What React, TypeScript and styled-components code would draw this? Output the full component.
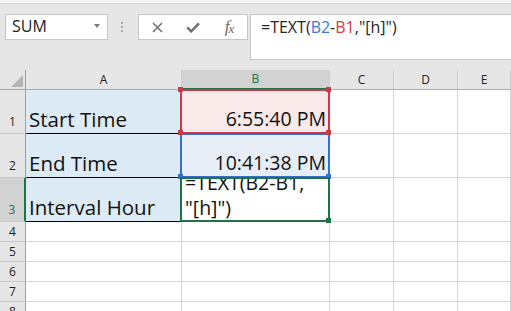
import React from 'react';
import styled, { createGlobalStyle, css } from 'styled-components';

const GlobalStyle = createGlobalStyle`
  html, body { margin: 0; padding: 0; background: #ffffff; }
  body {
    font-family: "Open Sans", "Noto Sans", sans-serif;
    width: 511px;
    height: 311px;
    overflow: hidden;
  }
  * { box-sizing: border-box; }
`;

const Page = styled.div`
  width: 511px;
  height: 311px;
  overflow: hidden;
  display: flex;
  flex-direction: column;
  background: #ffffff;
`;

const RibbonEdge = styled.div`
  flex: none;
  height: 4px;
  background: #f3f3f3;
  border-bottom: 1px solid #d5d5d5;
`;

const FormulaRow = styled.div`
  flex: none;
  height: 66px;
  display: flex;
  align-items: flex-start;
  padding: 10px 0 0 5px;
  background: #e6e6e6;
`;

const NameBox = styled.div`
  flex: none;
  width: 103px;
  height: 26px;
  background: #ffffff;
  border: 1px solid #c6c6c6;
  display: flex;
  align-items: flex-start;
  justify-content: space-between;
  padding: 0 7px 0 6px;
  font-size: 16px;
  line-height: 22px;
  color: #222222;
`;

const DropArrow = styled.span`
  align-self: center;
  margin-top: -2px;
  width: 0;
  height: 0;
  border-left: 3.5px solid transparent;
  border-right: 3.5px solid transparent;
  border-top: 4px solid #7a7a7a;
`;

const Grip = styled.div`
  flex: none;
  display: flex;
  flex-direction: column;
  gap: 2px;
  margin: 8px 15px 0 13px;
`;

const GripDot = styled.span`
  width: 2px;
  height: 2px;
  background: #a9a9a9;
`;

const FuncBox = styled.div`
  flex: none;
  width: 110px;
  height: 26px;
  background: #ffffff;
  border: 1px solid #c6c6c6;
  display: flex;
`;

const FuncButton = styled.div`
  width: 36px;
  height: 24px;
  display: flex;
  align-items: center;
  justify-content: center;
  color: #6f6f6f;
`;

const FxLabel = styled.span`
  font-family: "Liberation Serif", "DejaVu Serif", serif;
  font-style: italic;
  font-size: 17px;
  line-height: 16px;
  color: #6a6a6a;
  letter-spacing: -1px;
`;

const FxSub = styled.span`
  font-size: 13px;
  position: relative;
  top: 1px;
`;

const FormulaBar = styled.div`
  flex: 1;
  margin-left: 2px;
  height: 46px;
  background: #ffffff;
  border: 1px solid #c6c6c6;
  border-right: none;
  padding: 2px 0 0 10px;
  font-size: 16px;
  line-height: 20px;
  color: #262626;
  white-space: nowrap;
`;

const Ref = styled.span<{ $color: string }>`
  color: ${(p) => p.$color};
`;

const Sheet = styled.div`
  flex: none;
  display: grid;
  grid-template-columns: 26px 156px 148px 64px 64px 1fr;
  grid-template-rows: 20px 44px 44px 44px repeat(6, 20px);
`;

const Corner = styled.div`
  background: #e6e6e6;
  border-right: 1px solid #9e9e9e;
  border-bottom: 1px solid #ababab;
  display: flex;
  justify-content: flex-end;
  align-items: flex-end;
  padding: 0 2px 2px 0;
`;

const CornerTriangle = styled.span`
  width: 0;
  height: 0;
  border-left: 12px solid transparent;
  border-bottom: 12px solid #b4b4b4;
`;

const ColHeader = styled.div<{ $active?: boolean }>`
  background: ${(p) => (p.$active ? '#d2d2d2' : '#e6e6e6')};
  color: ${(p) => (p.$active ? '#217346' : '#222222')};
  border-right: 1px solid #cfcfcf;
  border-bottom: ${(p) => (p.$active ? '2px solid #217346' : '1px solid #ababab')};
  display: flex;
  align-items: center;
  justify-content: center;
  font-size: 12px;
  line-height: 16px;
`;

const RowHeader = styled.div<{ $active?: boolean; $tall?: boolean }>`
  background: ${(p) => (p.$active ? '#d2d2d2' : '#e6e6e6')};
  color: ${(p) => (p.$active ? '#217346' : '#222222')};
  border-right: ${(p) => (p.$active ? '2px solid #217346' : '1px solid #9e9e9e')};
  border-bottom: 1px solid #c8c8c8;
  display: flex;
  justify-content: center;
  align-items: ${(p) => (p.$tall ? 'flex-end' : 'center')};
  padding-bottom: ${(p) => (p.$tall ? '3px' : '0')};
  font-size: 12px;
  line-height: 16px;
`;

const Cell = styled.div<{ $fill?: string; $edge?: string }>`
  position: relative;
  background: ${(p) => p.$fill || '#ffffff'};
  border-right: 1px solid #d4d4d4;
  border-bottom: 1px solid ${(p) => p.$edge || '#d4d4d4'};
`;

const CellContent = styled.div<{ $end?: boolean; $size?: number; $lh?: number; $pb?: number }>`
  height: 100%;
  overflow: hidden;
  display: flex;
  align-items: flex-end;
  justify-content: ${(p) => (p.$end ? 'flex-end' : 'flex-start')};
  padding: 0 3px ${(p) => p.$pb ?? 2}px 3px;
  font-size: ${(p) => p.$size ?? 20}px;
  line-height: ${(p) => p.$lh ?? 24}px;
  color: #111111;
  white-space: pre-line;
`;

const Highlight = styled.div<{ $color: string; $z: number }>`
  position: absolute;
  top: -1px;
  left: -2px;
  right: -1px;
  bottom: -1px;
  border: 2px solid ${(p) => p.$color};
  z-index: ${(p) => p.$z};
  pointer-events: none;
`;

type CornerPos = 'tl' | 'tr' | 'bl' | 'br';

const Handle = styled.span<{ $color: string; $at: CornerPos }>`
  position: absolute;
  width: 5px;
  height: 5px;
  background: ${(p) => p.$color};
  ${(p) => (p.$at[0] === 't' ? css`top: -4px;` : css`bottom: -3px;`)}
  ${(p) => (p.$at[1] === 'l' ? css`left: -4px;` : css`right: -3px;`)}
`;

const RED = '#c63a4b';
const BLUE = '#3a6fc6';
const GREEN = '#217346';

const CloseIcon = () => (
  <svg width="11" height="11" viewBox="0 0 11 11">
    <path d="M1 1 L10 10 M10 1 L1 10" stroke="#6f6f6f" strokeWidth="1.5" fill="none" />
  </svg>
);

const CheckIcon = () => (
  <svg width="14" height="11" viewBox="0 0 14 11">
    <path d="M1.2 5.4 L5.2 9.4 L13 1.4" stroke="#6f6f6f" strokeWidth="2.4" fill="none" />
  </svg>
);

const smallRows = ['4', '5', '6', '7', '8', '9'];
const restCols = ['C', 'D', 'E'];

export default function App() {
  return (
    <Page>
      <GlobalStyle />
      <RibbonEdge />
      <FormulaRow>
        <NameBox>
          <span>SUM</span>
          <DropArrow />
        </NameBox>
        <Grip>
          <GripDot />
          <GripDot />
          <GripDot />
        </Grip>
        <FuncBox>
          <FuncButton>
            <CloseIcon />
          </FuncButton>
          <FuncButton>
            <CheckIcon />
          </FuncButton>
          <FuncButton>
            <FxLabel>
              f<FxSub>x</FxSub>
            </FxLabel>
          </FuncButton>
        </FuncBox>
        <FormulaBar>
          =TEXT(<Ref $color="#3b78d8">B2</Ref>-<Ref $color="#d8384b">B1</Ref>,"[h]")
        </FormulaBar>
      </FormulaRow>

      <Sheet>
        <Corner>
          <CornerTriangle />
        </Corner>
        <ColHeader>A</ColHeader>
        <ColHeader $active>B</ColHeader>
        {restCols.map((c) => (
          <ColHeader key={c}>{c}</ColHeader>
        ))}

        <RowHeader $tall>1</RowHeader>
        <Cell $fill="#ddebf7" $edge="#000000">
          <CellContent $size={20.5}>Start Time</CellContent>
        </Cell>
        <Cell $fill="#fae9e9">
          <CellContent $end $size={19.5}>6:55:40 PM</CellContent>
          <Highlight $color={RED} $z={3}>
            <Handle $color={RED} $at="tl" />
            <Handle $color={RED} $at="tr" />
            <Handle $color={RED} $at="bl" />
            <Handle $color={RED} $at="br" />
          </Highlight>
        </Cell>
        {restCols.map((c) => (
          <Cell key={c} />
        ))}

        <RowHeader $tall>2</RowHeader>
        <Cell $fill="#ddebf7" $edge="#000000">
          <CellContent $size={20.5}>End Time</CellContent>
        </Cell>
        <Cell $fill="#e8eef8">
          <CellContent $end $size={19.5}>10:41:38 PM</CellContent>
          <Highlight $color={BLUE} $z={2}>
            <Handle $color={BLUE} $at="bl" />
            <Handle $color={BLUE} $at="br" />
          </Highlight>
        </Cell>
        {restCols.map((c) => (
          <Cell key={c} />
        ))}

        <RowHeader $tall $active>3</RowHeader>
        <Cell $fill="#ddebf7" $edge="#000000">
          <CellContent $size={20.5}>Interval Hour</CellContent>
        </Cell>
        <Cell>
          <CellContent $size={19.5} $lh={25} $pb={1}>
            {'=TEXT(B2-B1,\n"[h]")'}
          </CellContent>
          <Highlight $color={GREEN} $z={4}>
            <Handle $color={GREEN} $at="br" />
          </Highlight>
        </Cell>
        {restCols.map((c) => (
          <Cell key={c} />
        ))}

        {smallRows.map((r) => (
          <React.Fragment key={r}>
            <RowHeader>{r}</RowHeader>
            <Cell />
            <Cell />
            {restCols.map((c) => (
              <Cell key={c} />
            ))}
          </React.Fragment>
        ))}
      </Sheet>
    </Page>
  );
}
